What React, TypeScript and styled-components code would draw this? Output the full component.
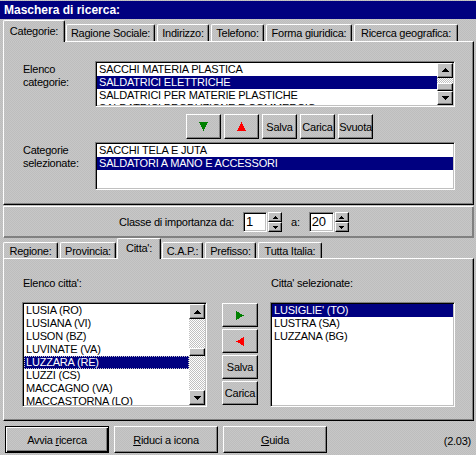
import styled, { createGlobalStyle, css } from 'styled-components';

const GlobalStyle = createGlobalStyle`
  html, body {
    margin: 0;
    padding: 0;
    background: #c0c0c0;
  }
  body {
    font-family: 'Liberation Sans', Arial, sans-serif;
  }
`;

const dither = css`
  background-color: #c2c2c2;
  background-image: repeating-conic-gradient(#c7c7c7 0 25%, #bdbdbd 0 50%);
  background-size: 2px 2px;
`;

const raised = css`
  border: 1px solid;
  border-color: #fff #000 #000 #fff;
  box-shadow: inset -1px -1px #808080;
`;

const sunken = css`
  border: 1px solid;
  border-color: #808080 #fff #fff #808080;
  box-shadow: inset 1px 1px #000, inset -1px -1px #c0c0c0;
  background: #fff;
`;

type Dir = 'up' | 'down' | 'left' | 'right';

const arrowPoints = (dir: Dir, w: number, h: number) => {
  switch (dir) {
    case 'up':
      return `0,${h} ${w / 2},0 ${w},${h}`;
    case 'down':
      return `0,0 ${w},0 ${w / 2},${h}`;
    case 'left':
      return `${w},0 0,${h / 2} ${w},${h}`;
    default:
      return `0,0 ${w},${h / 2} 0,${h}`;
  }
};

const Arrow = ({ dir, color, w, h }: { dir: Dir; color: string; w: number; h: number }) => (
  <svg width={w} height={h} viewBox={`0 0 ${w} ${h}`} shapeRendering="crispEdges">
    <polygon points={arrowPoints(dir, w, h)} fill={color} />
  </svg>
);

// ---- data

const topTabs = [
  { label: 'Categorie:', w: 62, active: true },
  { label: 'Ragione Sociale:', w: 89 },
  { label: 'Indirizzo:', w: 52 },
  { label: 'Telefono:', w: 53 },
  { label: 'Forma giuridica:', w: 86 },
  { label: 'Ricerca geografica:', w: 104 },
];

const geoTabs = [
  { label: 'Regione:', w: 55 },
  { label: 'Provincia:', w: 56 },
  { label: "Citta':", w: 44, active: true },
  { label: 'C.A.P.:', w: 41 },
  { label: 'Prefisso:', w: 51 },
  { label: 'Tutta Italia:', w: 64 },
];

const categories = [
  'SACCHI MATERIA PLASTICA',
  'SALDATRICI ELETTRICHE',
  'SALDATRICI PER MATERIE PLASTICHE',
  'SALDATRICI PRODUZIONE E COMMERCIO',
];

const chosenCategories = ['SACCHI TELA E JUTA', 'SALDATORI A MANO E ACCESSORI'];

const cities = [
  'LUSIA (RO)',
  'LUSIANA (VI)',
  'LUSON (BZ)',
  'LUVINATE (VA)',
  'LUZZARA (RE)',
  'LUZZI (CS)',
  'MACCAGNO (VA)',
  'MACCASTORNA (LO)',
];

const chosenCities = ["LUSIGLIE' (TO)", 'LUSTRA (SA)', 'LUZZANA (BG)'];

// ---- list box

type ListProps = {
  items: string[];
  selected: number;
  focused?: boolean;
  thumbTop?: number;
  width: number;
  height: number;
};

const ListBox = ({ items, selected, focused = false, thumbTop, width, height }: ListProps) => (
  <ListFrame $w={width} $h={height}>
    <ListRows>
      {items.map((item, i) => (
        <Row key={item} $selected={i === selected} $focused={focused && i === selected}>
          {item}
        </Row>
      ))}
    </ListRows>
    {thumbTop !== undefined && (
      <ScrollBar>
        <ScrollButton>
          <Arrow dir="up" color="#000" w={7} h={4} />
        </ScrollButton>
        <ScrollTrack $offset={thumbTop}>
          <ScrollThumb />
        </ScrollTrack>
        <ScrollButton>
          <Arrow dir="down" color="#000" w={7} h={4} />
        </ScrollButton>
      </ScrollBar>
    )}
  </ListFrame>
);

// ---- spin field

const SpinField = ({ value, width }: { value: string; width: number }) => (
  <SpinWrap>
    <SpinInput $w={width}>{value}</SpinInput>
    <SpinButtons>
      <SpinButton>
        <Arrow dir="up" color="#000" w={5} h={3} />
      </SpinButton>
      <SpinButton>
        <Arrow dir="down" color="#000" w={5} h={3} />
      </SpinButton>
    </SpinButtons>
  </SpinWrap>
);

const App = () => (
  <>
    <GlobalStyle />
    <Window>
      <TitleBar>Maschera di ricerca:</TitleBar>

      <TabStrip $h={22}>
        {topTabs.map((t) => (
          <Tab key={t.label} $w={t.w} $h={t.active ? 22 : 17} $active={!!t.active}>
            {t.label}
          </Tab>
        ))}
      </TabStrip>
      <Panel $h={164}>
        <FieldRow>
          <FieldLabel>
            Elenco
            <br />
            categorie:
          </FieldLabel>
          <ListBox items={categories} selected={1} thumbTop={5} width={360} height={46} />
        </FieldRow>
        <FieldRow $mt={7}>
          <ButtonRow>
            <Button $w={35} $h={25}>
              <Arrow dir="down" color="#008000" w={9} h={9} />
            </Button>
            <Button $w={35} $h={25}>
              <Arrow dir="up" color="#ff0000" w={9} h={9} />
            </Button>
            <Button $w={35} $h={25}>Salva</Button>
            <Button $w={35} $h={25}>Carica</Button>
            <Button $w={35} $h={25}>Svuota</Button>
          </ButtonRow>
        </FieldRow>
        <FieldRow $mt={3}>
          <FieldLabel>
            Categorie
            <br />
            selezionate:
          </FieldLabel>
          <ListBox items={chosenCategories} selected={1} width={360} height={48} />
        </FieldRow>
      </Panel>

      <Strip>
        <StripText>Classe di importanza da:</StripText>
        <SpinField value="1" width={24} />
        <StripText $ml={9}>a:</StripText>
        <SpinField value="20" width={25} />
      </Strip>

      <TabStrip $h={20}>
        {geoTabs.map((t) => (
          <Tab key={t.label} $w={t.w} $h={t.active ? 21 : 16} $active={!!t.active}>
            {t.label}
          </Tab>
        ))}
      </TabStrip>
      <Panel $h={163}>
        <CityArea>
          <CityColumn>
            <ColumnLabel>Elenco citta':</ColumnLabel>
            <ListBox items={cities} selected={4} focused thumbTop={29} width={185} height={105} />
          </CityColumn>
          <ActionColumn>
            <Button $w={36} $h={24}>
              <Arrow dir="right" color="#008000" w={8} h={9} />
            </Button>
            <Button $w={36} $h={24}>
              <Arrow dir="left" color="#ff0000" w={8} h={9} />
            </Button>
            <Button $w={36} $h={24}>Salva</Button>
            <Button $w={36} $h={24}>Carica</Button>
          </ActionColumn>
          <CityColumn $ml={12}>
            <ColumnLabel>Citta' selezionate:</ColumnLabel>
            <ListBox items={chosenCities} selected={0} width={185} height={105} />
          </CityColumn>
        </CityArea>
      </Panel>

      <BottomBar>
        <DialogButton $default>
          <span>
            Avvia <u>r</u>icerca
          </span>
        </DialogButton>
        <DialogButton>
          <span>
            <u>R</u>iduci a icona
          </span>
        </DialogButton>
        <DialogButton>
          <span>
            <u>G</u>uida
          </span>
        </DialogButton>
        <Version>(2.03)</Version>
      </BottomBar>
    </Window>
  </>
);

const Window = styled.div`
  width: 476px;
  height: 455px;
  box-sizing: border-box;
  padding-top: 1px;
  display: flex;
  flex-direction: column;
  overflow: hidden;
  color: #000;
  font-size: 11px;
  letter-spacing: -0.25px;
  ${dither}
`;

const TitleBar = styled.div`
  height: 18px;
  line-height: 18px;
  padding-left: 4px;
  background: #000080;
  color: #fff;
  font-size: 12px;
  font-weight: bold;
  letter-spacing: 0;
`;

const TabStrip = styled.div<{ $h: number }>`
  height: ${(p) => p.$h}px;
  display: flex;
  align-items: flex-end;
  gap: 2px;
  padding-left: 3px;
  position: relative;
  z-index: 1;
`;

const Tab = styled.div<{ $w: number; $h: number; $active: boolean }>`
  width: ${(p) => p.$w}px;
  height: ${(p) => p.$h}px;
  box-sizing: border-box;
  display: flex;
  align-items: center;
  justify-content: center;
  white-space: nowrap;
  border: 1px solid;
  border-color: #fff #000 transparent #fff;
  border-bottom: none;
  border-radius: 2px 2px 0 0;
  box-shadow: inset -1px 0 #808080;
  ${dither}
  ${(p) =>
    p.$active &&
    css`
      margin: 0 -1px -1px -1px;
      padding-bottom: 2px;
      &:first-child {
        margin-left: 0;
      }
    `}
`;

const Panel = styled.div<{ $h: number }>`
  height: ${(p) => p.$h}px;
  margin: 0 2px 0 3px;
  box-sizing: border-box;
  padding: 19px 0 0 19px;
  border: 1px solid;
  border-color: #fff #000 #000 #fff;
  box-shadow: inset -1px -1px #808080;
`;

const FieldRow = styled.div<{ $mt?: number }>`
  display: flex;
  margin-top: ${(p) => p.$mt ?? 0}px;
`;

const FieldLabel = styled.div`
  width: 72px;
  flex-shrink: 0;
  padding-top: 2px;
  line-height: 13px;
`;

const ButtonRow = styled.div`
  display: flex;
  gap: 3px;
  margin-left: 163px;
`;

const Button = styled.div<{ $w: number; $h: number }>`
  width: ${(p) => p.$w}px;
  height: ${(p) => p.$h}px;
  box-sizing: border-box;
  display: flex;
  align-items: center;
  justify-content: center;
  font-size: 11px;
  ${raised}
  ${dither}
`;

const ListFrame = styled.div<{ $w: number; $h: number }>`
  width: ${(p) => p.$w}px;
  height: ${(p) => p.$h}px;
  box-sizing: border-box;
  padding: 1px;
  display: flex;
  ${sunken}
`;

const ListRows = styled.div`
  flex: 1;
  min-width: 0;
  overflow: hidden;
`;

const Row = styled.div<{ $selected: boolean; $focused: boolean }>`
  height: 13px;
  line-height: 13px;
  padding-left: 2px;
  white-space: nowrap;
  font-size: 11px;
  letter-spacing: -0.2px;
  background: ${(p) => (p.$selected ? '#000080' : 'transparent')};
  color: ${(p) => (p.$selected ? '#fff' : '#000')};
  ${(p) =>
    p.$focused &&
    css`
      outline: 1px dotted #c8c8c8;
      outline-offset: -1px;
    `}
`;

const ScrollBar = styled.div`
  width: 16px;
  flex-shrink: 0;
  display: flex;
  flex-direction: column;
`;

const ScrollButton = styled.div`
  height: 15px;
  box-sizing: border-box;
  display: flex;
  align-items: center;
  justify-content: center;
  background: #c0c0c0;
  ${raised}
`;

const ScrollTrack = styled.div<{ $offset: number }>`
  flex: 1;
  padding-top: ${(p) => p.$offset}px;
  background-color: #e0e0e0;
  background-image: repeating-conic-gradient(#fff 0 25%, #c0c0c0 0 50%);
  background-size: 2px 2px;
`;

const ScrollThumb = styled.div`
  height: 8px;
  box-sizing: border-box;
  background: #c0c0c0;
  ${raised}
`;

const Strip = styled.div`
  height: 32px;
  margin: 1px 2px 0 3px;
  box-sizing: border-box;
  display: flex;
  align-items: center;
  padding-left: 115px;
  border: 1px solid;
  border-color: #fff #808080 #808080 #fff;
  box-shadow: inset -1px -1px #808080;
`;

const StripText = styled.span<{ $ml?: number }>`
  margin-left: ${(p) => p.$ml ?? 0}px;
  margin-right: 9px;
  white-space: nowrap;
`;

const SpinWrap = styled.div`
  display: flex;
`;

const SpinInput = styled.div<{ $w: number }>`
  width: ${(p) => p.$w}px;
  height: 20px;
  box-sizing: border-box;
  padding-left: 2px;
  line-height: 18px;
  font-size: 13px;
  ${sunken}
`;

const SpinButtons = styled.div`
  width: 14px;
  display: flex;
  flex-direction: column;
  margin-left: 1px;
`;

const SpinButton = styled.div`
  height: 10px;
  box-sizing: border-box;
  display: flex;
  align-items: center;
  justify-content: center;
  background: #c0c0c0;
  ${raised}
`;

const CityArea = styled.div`
  display: flex;
  margin: -1px 0 0 -1px;
`;

const CityColumn = styled.div<{ $ml?: number }>`
  display: flex;
  flex-direction: column;
  margin-left: ${(p) => p.$ml ?? 0}px;
`;

const ColumnLabel = styled.div`
  height: 13px;
  line-height: 13px;
  margin-bottom: 12px;
  padding-left: 1px;
`;

const ActionColumn = styled.div`
  width: 36px;
  margin-left: 15px;
  padding-top: 26px;
  display: flex;
  flex-direction: column;
  gap: 2px;
`;

const BottomBar = styled.div`
  flex: 1;
  display: flex;
  align-items: flex-start;
  gap: 5px;
  padding: 5px 5px 0 5px;
`;

const DialogButton = styled.div<{ $default?: boolean }>`
  width: 104px;
  height: 27px;
  box-sizing: border-box;
  display: flex;
  align-items: center;
  justify-content: center;
  font-size: 11px;
  white-space: pre;
  ${dither}
  ${(p) =>
    p.$default
      ? css`
          border: 1px solid #000;
          box-shadow: inset 1px 1px #fff, inset -1px -1px #000, inset -2px -2px #808080;
        `
      : raised}
`;

const Version = styled.span`
  margin-left: auto;
  align-self: center;
`;

export default App;
